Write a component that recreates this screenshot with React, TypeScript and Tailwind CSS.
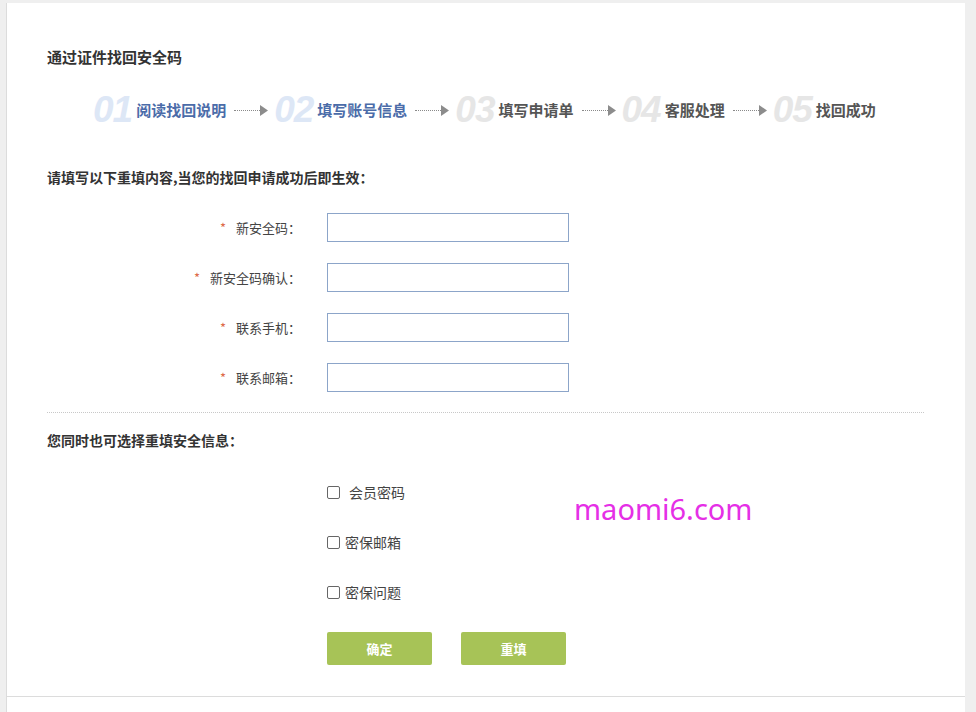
import React from "react";

const steps = [
  { no: "01", label: "阅读找回说明", done: true },
  { no: "02", label: "填写账号信息", done: true },
  { no: "03", label: "填写申请单", done: false },
  { no: "04", label: "客服处理", done: false },
  { no: "05", label: "找回成功", done: false },
];

const fields = [
  { label: "新安全码：" },
  { label: "新安全码确认：" },
  { label: "联系手机：" },
  { label: "联系邮箱：" },
];

const options = [
  { label: "会员密码", wide: true },
  { label: "密保邮箱", wide: false },
  { label: "密保问题", wide: false },
];

function Arrow() {
  return (
    <div className="flex items-center ml-[8px] mr-[6px]">
      <div className="w-[26px] border-t border-dotted border-[#8a8a8a]" />
      <svg width="8" height="11" viewBox="0 0 8 11" className="block">
        <path d="M0 0 L8 5.5 L0 11 Z" fill="#8c8c8c" />
      </svg>
    </div>
  );
}

export default function App() {
  return (
    <div className="min-h-screen w-full bg-[#efefef] font-['Noto_Sans_CJK_SC','Microsoft_YaHei',sans-serif] text-[#333]">
      <div className="ml-[6px] pt-[3px] w-[959px]">
        <div className="relative h-[693px] bg-white border-l border-[#dcdcdc] pl-[40px] pr-[41px] pt-[44px]">
          <h1 className="text-[15px] leading-[20px] font-bold text-[#333]">通过证件找回安全码</h1>

          {/* Steps */}
          <div className="mt-[23px] h-[40px] flex items-center pl-[46px]">
            {steps.map((s, i) => (
              <div key={s.no} className="flex items-center">
                <span
                  className={`font-['Liberation_Sans',Arial,sans-serif] italic font-bold text-[37px] leading-[40px] tracking-[-1px] ${
                    s.done ? "text-[#dde7f6]" : "text-[#e6e6e6]"
                  }`}
                >
                  {s.no}
                </span>
                <span
                  className={`ml-[4px] text-[15px] leading-[20px] font-bold ${
                    s.done ? "text-[#4b6ca9]" : "text-[#555]"
                  }`}
                >
                  {s.label}
                </span>
                {i < steps.length - 1 && <Arrow />}
              </div>
            ))}
          </div>

          <p className="mt-[37px] text-[14px] leading-[20px] font-bold text-[#333]">
            请填写以下重填内容,当您的找回申请成功后即生效：
          </p>

          {/* Form */}
          <div className="mt-[26px] flex flex-col gap-[21px]">
            {fields.map((f) => (
              <div key={f.label} className="flex items-center h-[29px]">
                <div className="w-[254px] flex justify-end items-center text-[13px] leading-[20px] text-[#444]">
                  <span className="text-[#dd6a48] mr-[10px]">*</span>
                  <span>{f.label}</span>
                </div>
                <input
                  type="text"
                  className="ml-[26px] w-[242px] h-[29px] border border-[#8ca5c9] bg-white outline-none px-2 text-[13px]"
                />
              </div>
            ))}
          </div>

          <div className="mt-[20px] border-t border-dotted border-[#c8c8c8]" />

          <p className="mt-[17px] text-[14px] leading-[20px] font-bold text-[#333]">您同时也可选择重填安全信息：</p>

          <div className="mt-[32px] pl-[280px] flex flex-col gap-[30px]">
            {options.map((o) => (
              <label key={o.label} className="flex items-center h-[20px] text-[14px] text-[#444]">
                <span className="w-[13px] h-[13px] border border-[#666] rounded-[2px] bg-white" />
                <span className={o.wide ? "ml-[9px]" : "ml-[5px]"}>{o.label}</span>
              </label>
            ))}
          </div>

          <div className="mt-[30px] pl-[280px] flex gap-[29px]">
            <button className="w-[105px] h-[33px] rounded-[2px] bg-[#a7c357] text-white text-[13px] font-bold">确定</button>
            <button className="w-[105px] h-[33px] rounded-[2px] bg-[#a7c357] text-white text-[13px] font-bold">重填</button>
          </div>

          {/* watermark */}
          <div className="absolute left-[567px] top-[488px] font-['Noto_Sans',sans-serif] text-[29px] leading-[36px] text-[#e52fe6]">
            maomi6.com
          </div>
        </div>
        <div className="h-[16px] bg-white border-l border-t border-[#dcdcdc]" />
      </div>
    </div>
  );
}
